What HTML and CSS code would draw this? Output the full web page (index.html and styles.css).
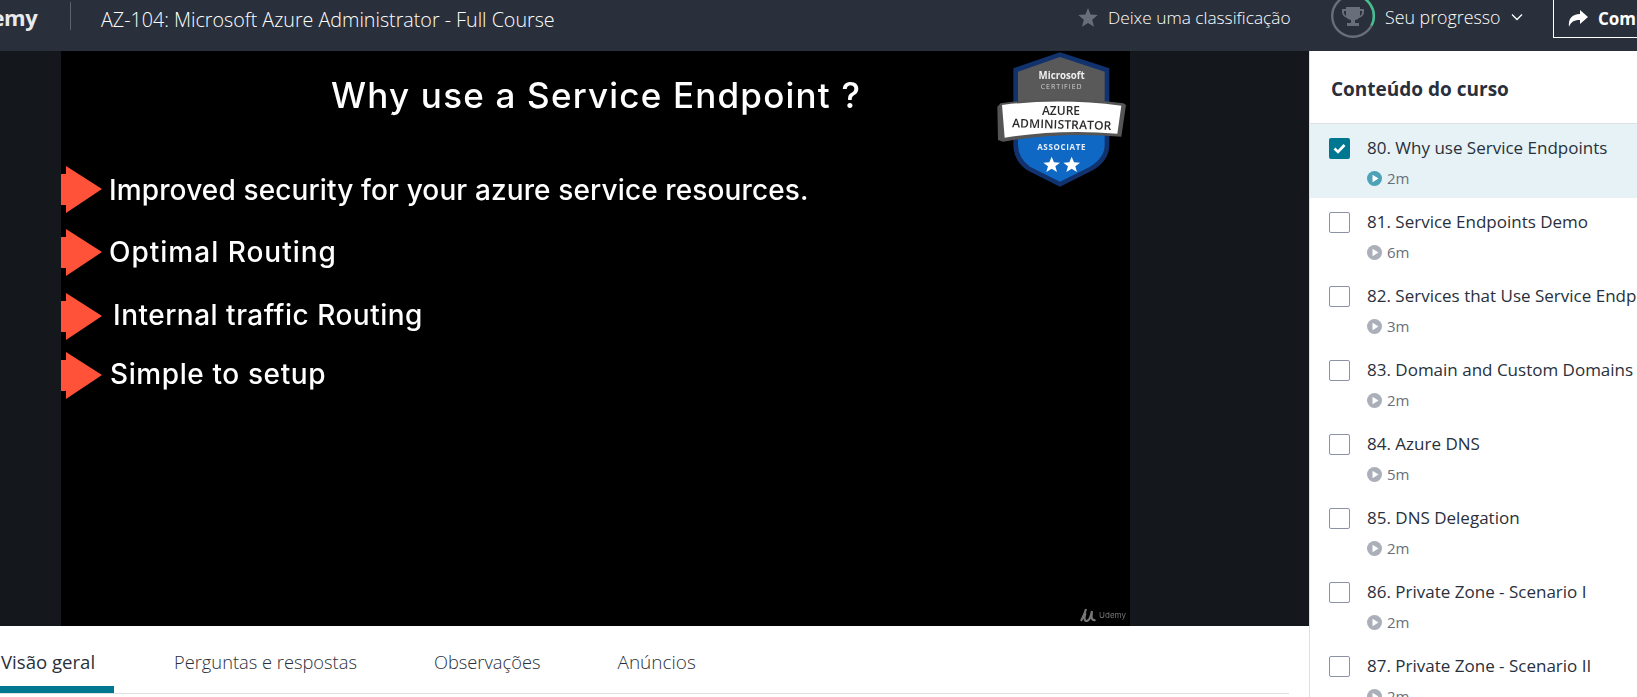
FILE: index.html
```html
<!DOCTYPE html>
<html lang="en">
<head>
    <meta charset="UTF-8">
    <meta name="viewport" content="width=device-width, initial-scale=1.0">
    <title>AZ-104: Microsoft Azure Administrator - Full Course</title>
    <link rel="stylesheet" href="styles.css">
</head>
<body>
    <header class="topbar">
        <div class="logo">Udemy</div>
        <div class="topbar-divider"></div>
        <div class="course-title">AZ-104: Microsoft Azure Administrator - Full Course</div>
        <div class="rate">
            <svg class="star" viewBox="0 0 20 19"><polygon points="10,0 12.6,6.6 19.8,7.1 14.2,11.7 16,18.8 10,15 4,18.8 5.8,11.7 0.2,7.1 7.4,6.6" fill="#686f7a"/></svg>
            <span>Deixe uma classificação</span>
        </div>
        <div class="progress">
            <svg class="ring" viewBox="0 0 44 44">
                <circle cx="22" cy="22" r="20.8" fill="none" stroke="#686f7a" stroke-width="2.4"/>
                <path d="M22 1.2 A20.8 20.8 0 0 1 40.5 31.5" fill="none" stroke="#41c08c" stroke-width="2.4"/>
                <path d="M15 13h14v2h4v3c0 3-2 5-5 6-1 1-3 2-4 2v3h4v3H16v-3h4v-3c-1 0-3-1-4-2-3-1-5-3-5-6v-3h4zM13 17v1c0 2 1 3 2 4v-5zM31 17h-2v5c1-1 2-2 2-4z" fill="#686f7a" fill-rule="evenodd"/>
            </svg>
            <span>Seu progresso</span>
            <svg class="chevron" viewBox="0 0 12 8"><path d="M1 1.5l5 5 5-5" fill="none" stroke="#fff" stroke-width="1.3"/></svg>
        </div>
        <div class="share">
            <svg class="share-icon" viewBox="0 0 20 17"><path d="M12 0l8 7-8 7v-4C7 10 3 11 1 17 0 9 4 4 12 4z" fill="#fff"/></svg>
            <span>Compartilhar</span>
        </div>
    </header>

    <div class="main">
        <div class="content">
            <div class="player">
                <div class="slide">
                    <h1 class="slide-title">Why use a Service Endpoint ?</h1>
                    <div class="point point-1">
                        <svg class="arrow" viewBox="0 0 41 47"><polygon points="0,8 5,8 5,0 41,23 5,47 5,39 0,39" fill="#ff5238"/></svg>
                        <span>Improved security for your azure service resources.</span>
                    </div>
                    <div class="point point-2">
                        <svg class="arrow" viewBox="0 0 41 47"><polygon points="0,8 5,8 5,0 41,23 5,47 5,39 0,39" fill="#ff5238"/></svg>
                        <span>Optimal Routing</span>
                    </div>
                    <div class="point point-3">
                        <svg class="arrow" viewBox="0 0 41 47"><polygon points="0,8 5,8 5,0 41,23 5,47 5,39 0,39" fill="#ff5238"/></svg>
                        <span>Internal traffic Routing</span>
                    </div>
                    <div class="point point-4">
                        <svg class="arrow" viewBox="0 0 41 47"><polygon points="0,8 5,8 5,0 41,23 5,47 5,39 0,39" fill="#ff5238"/></svg>
                        <span>Simple to setup</span>
                    </div>

                    <svg class="badge" viewBox="0 0 480 450">
                        <path d="M240 22 L388 70 V300 Q388 345 340 375 L240 425 L140 375 Q100 345 100 300 V70 Z" fill="#12326e"/>
                        <path d="M240 36 L374 80 V180 H114 V80 Z" fill="#595959"/>
                        <path d="M114 270 H374 V300 Q374 338 330 365 L240 410 L150 365 Q114 338 114 300 Z" fill="#0f69c4"/>
                        <path d="M62 175 Q240 150 430 175 L438 180 L424 275 Q240 260 70 290 L54 285 L52 185 Z" fill="#555"/>
                        <path d="M66 180 Q240 158 424 182 L412 266 Q240 252 74 278 Z" fill="#fff"/>
                        <text x="245" y="102" class="badge-ms">Microsoft</text>
                        <text x="245" y="131" class="badge-cert">CERTIFIED</text>
                        <text x="243" y="211" class="badge-role">AZURE</text>
                        <text x="245" y="251" class="badge-admin" transform="rotate(1.5 245 251)">ADMINISTRATOR</text>
                        <text x="245" y="316" class="badge-level">ASSOCIATE</text>
                        <polygon points="215,335 222,352 240,353 226,364 231,381 215,371 199,381 204,364 190,353 208,352" fill="#fff"/>
                        <polygon points="275,335 282,352 300,353 286,364 291,381 275,371 259,381 264,364 250,353 268,352" fill="#fff"/>
                    </svg>

                    <div class="watermark">
                        <svg class="watermark-icon" viewBox="0 0 16 14"><path d="M1 13C3 9 5 5 6 1M5.5 5C4 9 4 13 6.5 13S11 8 12 3M12 5C11 9 11.5 13 15.5 12" fill="none" stroke="#777" stroke-width="2.2"/></svg>
                        <span>Udemy</span>
                    </div>
                </div>
            </div>
            <nav class="tabs">
                <a class="tab tab-active">Visão geral</a>
                <a class="tab">Perguntas e respostas</a>
                <a class="tab">Observações</a>
                <a class="tab tab-last">Anúncios</a>
            </nav>
        </div>

        <aside class="sidebar">
            <div class="sidebar-head">Conteúdo do curso</div>
            <div class="lesson lesson-current">
                <span class="check check-on"><svg viewBox="0 0 21 21"><path d="M5.5 10.5l3.5 3.5 6.5-7" fill="none" stroke="#fff" stroke-width="2.6"/></svg></span>
                <div class="lesson-info">
                    <div class="lesson-title">80. Why use Service Endpoints</div>
                    <div class="lesson-time"><svg class="play" viewBox="0 0 15 15"><circle cx="7.5" cy="7.5" r="7.5" fill="#4da2b7"/><polygon points="5.5,3.8 11.5,7.5 5.5,11.2" fill="#fff"/></svg>2m</div>
                </div>
            </div>
            <div class="lesson">
                <span class="check"></span>
                <div class="lesson-info">
                    <div class="lesson-title">81. Service Endpoints Demo</div>
                    <div class="lesson-time"><svg class="play" viewBox="0 0 15 15"><circle cx="7.5" cy="7.5" r="7.5" fill="#abafb9"/><polygon points="5.5,3.8 11.5,7.5 5.5,11.2" fill="#fff"/></svg>6m</div>
                </div>
            </div>
            <div class="lesson">
                <span class="check"></span>
                <div class="lesson-info">
                    <div class="lesson-title">82. Services that Use Service Endpoints</div>
                    <div class="lesson-time"><svg class="play" viewBox="0 0 15 15"><circle cx="7.5" cy="7.5" r="7.5" fill="#abafb9"/><polygon points="5.5,3.8 11.5,7.5 5.5,11.2" fill="#fff"/></svg>3m</div>
                </div>
            </div>
            <div class="lesson">
                <span class="check"></span>
                <div class="lesson-info">
                    <div class="lesson-title">83. Domain and Custom Domains</div>
                    <div class="lesson-time"><svg class="play" viewBox="0 0 15 15"><circle cx="7.5" cy="7.5" r="7.5" fill="#abafb9"/><polygon points="5.5,3.8 11.5,7.5 5.5,11.2" fill="#fff"/></svg>2m</div>
                </div>
            </div>
            <div class="lesson">
                <span class="check"></span>
                <div class="lesson-info">
                    <div class="lesson-title">84. Azure DNS</div>
                    <div class="lesson-time"><svg class="play" viewBox="0 0 15 15"><circle cx="7.5" cy="7.5" r="7.5" fill="#abafb9"/><polygon points="5.5,3.8 11.5,7.5 5.5,11.2" fill="#fff"/></svg>5m</div>
                </div>
            </div>
            <div class="lesson">
                <span class="check"></span>
                <div class="lesson-info">
                    <div class="lesson-title">85. DNS Delegation</div>
                    <div class="lesson-time"><svg class="play" viewBox="0 0 15 15"><circle cx="7.5" cy="7.5" r="7.5" fill="#abafb9"/><polygon points="5.5,3.8 11.5,7.5 5.5,11.2" fill="#fff"/></svg>2m</div>
                </div>
            </div>
            <div class="lesson">
                <span class="check"></span>
                <div class="lesson-info">
                    <div class="lesson-title">86. Private Zone - Scenario I</div>
                    <div class="lesson-time"><svg class="play" viewBox="0 0 15 15"><circle cx="7.5" cy="7.5" r="7.5" fill="#abafb9"/><polygon points="5.5,3.8 11.5,7.5 5.5,11.2" fill="#fff"/></svg>2m</div>
                </div>
            </div>
            <div class="lesson">
                <span class="check"></span>
                <div class="lesson-info">
                    <div class="lesson-title">87. Private Zone - Scenario II</div>
                    <div class="lesson-time"><svg class="play" viewBox="0 0 15 15"><circle cx="7.5" cy="7.5" r="7.5" fill="#abafb9"/><polygon points="5.5,3.8 11.5,7.5 5.5,11.2" fill="#fff"/></svg>2m</div>
                </div>
            </div>
        </aside>
    </div>
</body>
</html>
```

FILE: styles.css
```css
html,
body {
    height: 100%;
}

body {
    font-family: "Open Sans", "Liberation Sans", sans-serif;
    background-color: #fff;
    color: #29303b;
    margin: 0;
    padding: 0;
    overflow: hidden;
}

/* top bar */
.topbar {
    display: flex;
    align-items: flex-start;
    height: 51px;
    background-color: #29303b;
    color: #fff;
    white-space: nowrap;
    overflow: hidden;
}

.topbar > * {
    flex-shrink: 0;
}

.logo {
    font-size: 22px;
    font-weight: 700;
    line-height: 34px;
    margin-left: -38px;
    width: 108px;
    letter-spacing: -0.5px;
    color: #e9eaec;
}

.topbar-divider {
    width: 1px;
    height: 28px;
    margin-top: 2px;
    background-color: #5b626d;
}

.course-title {
    font-size: 19.7px;
    font-weight: 300;
    line-height: 40px;
    margin-left: 30px;
    width: 977px;
}

.rate {
    display: flex;
    align-items: center;
    height: 34px;
    font-size: 17.3px;
    font-weight: 300;
    width: 253px;
}

.star {
    width: 20px;
    height: 19px;
    margin-right: 10px;
}

.progress {
    display: flex;
    align-items: center;
    height: 34px;
    font-size: 17.8px;
    font-weight: 300;
    width: 222px;
}

.ring {
    align-self: flex-start;
    width: 44px;
    height: 44px;
    margin-top: -6px;
    margin-right: 10px;
    flex-shrink: 0;
}

.chevron {
    width: 12px;
    height: 8px;
    margin-left: 11px;
}

.share {
    display: flex;
    align-items: center;
    height: 37px;
    margin-top: -1px;
    padding: 0 12px 0 14px;
    border: 1px solid #fff;
    font-size: 17px;
    font-weight: 700;
}

.share-icon {
    width: 20px;
    height: 17px;
    margin-right: 10px;
}

/* player and tabs */
.main {
    display: flex;
    height: 646px;
}

.content {
    width: 1309px;
    flex-shrink: 0;
}

.player {
    height: 575px;
    background-color: #14171c;
    padding-left: 61px;
    box-sizing: border-box;
}

.slide {
    position: relative;
    width: 1069px;
    height: 575px;
    background-color: #000;
    color: #fff;
    overflow: hidden;
    font-family: "Inter", "Open Sans", sans-serif;
    filter: blur(0.4px);
}

.slide-title {
    margin: 0;
    padding: 22px 0 0 270px;
    font-size: 35px;
    letter-spacing: 1.2px;
    line-height: 44px;
    font-weight: 500;
    white-space: nowrap;
}

.point {
    display: flex;
    align-items: center;
    font-size: 28px;
    font-weight: 500;
    white-space: nowrap;
}

.arrow {
    width: 41px;
    height: 47px;
    flex-shrink: 0;
    margin-right: 7px;
}

.point-1 {
    margin-top: 49px;
    letter-spacing: 0.13px;
}

.point-2 {
    margin-top: 16px;
    letter-spacing: 1px;
}

.point-2 span {
    padding-bottom: 2px;
}

.point-3 {
    margin-top: 17px;
    letter-spacing: 0.5px;
}

.point-3 span {
    padding-bottom: 4px;
}

.point-3 .arrow {
    margin-right: 11px;
}

.point-4 {
    margin-top: 12px;
    letter-spacing: 0.6px;
}

.point-4 span {
    padding-bottom: 3px;
}

.point-4 .arrow {
    margin-right: 8px;
}

.badge {
    position: absolute;
    left: 919px;
    top: -6px;
    width: 160px;
    height: 150px;
}

.badge text {
    text-anchor: middle;
    font-family: "Open Sans", sans-serif;
}

.badge-ms {
    font-size: 29px;
    font-weight: 700;
    fill: #eee;
}

.badge-cert {
    font-size: 21px;
    letter-spacing: 3px;
    fill: #cfcfcf;
}

.badge-role {
    font-size: 36px;
    font-weight: 600;
    fill: #2b2b2b;
}

.badge-admin {
    font-size: 36px;
    font-weight: 600;
    fill: #2b2b2b;
    letter-spacing: 0.5px;
}

.badge-level {
    font-size: 24px;
    font-weight: 700;
    letter-spacing: 2px;
    fill: #e5eefa;
}

.watermark {
    position: absolute;
    right: 4px;
    bottom: 4px;
    display: flex;
    align-items: center;
    gap: 3px;
    font-size: 8px;
    color: #777;
}

.watermark-icon {
    width: 16px;
    height: 14px;
}

.tabs {
    display: flex;
    height: 67px;
    width: 1289px;
    border-bottom: 1px solid #dedfe0;
    box-sizing: content-box;
    font-size: 18.3px;
    font-weight: 300;
    color: #29303b;
}

.tab {
    display: block;
    line-height: 72px;
    white-space: nowrap;
    margin-right: 77px;
}

.tab-last {
    font-size: 19px;
}

.tab-active {
    width: 114px;
    box-sizing: border-box;
    padding-left: 1px;
    margin-right: 60px;
    color: #29303b;
    font-size: 18.6px;
    font-weight: 400;
    border-bottom: 7px solid #007791;
    height: 67px;
}

/* course content list */
.sidebar {
    flex: 1;
    min-width: 0;
    border-left: 1px solid #dedfe0;
    overflow: hidden;
}

.sidebar-head {
    height: 72px;
    line-height: 76px;
    padding-left: 21px;
    font-size: 19px;
    font-weight: 700;
    border-bottom: 1px solid #dedfe0;
}

.lesson {
    display: flex;
    height: 74px;
    padding: 14px 0 0 19px;
    box-sizing: border-box;
}

.lesson-current {
    background-color: #e6f2f5;
}

.check {
    display: block;
    width: 21px;
    height: 21px;
    box-sizing: border-box;
    border: 1px solid #8a92a3;
    border-radius: 2px;
    background-color: #fff;
    flex-shrink: 0;
    margin-right: 17px;
}

.check-on {
    background-color: #007791;
    border: none;
}

.check svg {
    display: block;
}

.lesson-info {
    min-width: 0;
}

.lesson-title {
    font-size: 17px;
    line-height: 22px;
    margin-top: -1px;
    white-space: nowrap;
}

.lesson-time {
    display: flex;
    align-items: center;
    margin-top: 10px;
    font-size: 15px;
    line-height: 18px;
    color: #686f7a;
}

.play {
    width: 15px;
    height: 15px;
    margin-right: 5px;
}
```
